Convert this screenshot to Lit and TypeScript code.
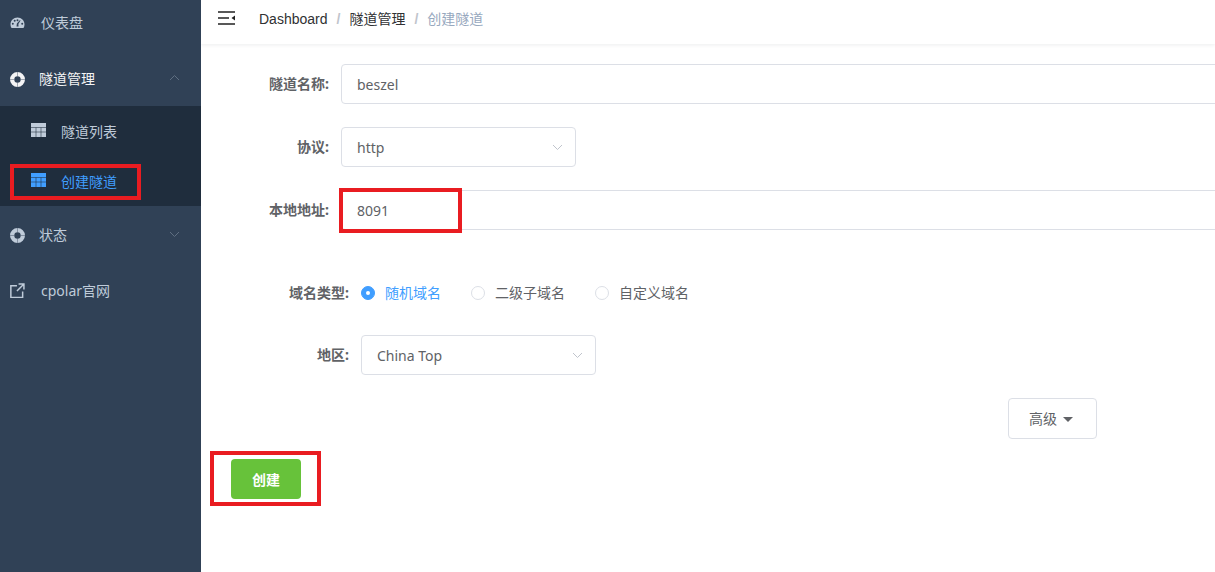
import { LitElement, css, html, svg } from 'lit'
import { customElement } from 'lit/decorators.js'

const gauge = svg`<path d="M7 1.500C3.100 1.500 0 4.600 0 8.400c0 1.300.4 2.500 1 3.600h12c.6-1.100 1-2.300 1-3.600 0-3.800-3.100-6.900-7-6.900zM2.300 8.800a1 1 0 1 1 0-2 1 1 0 0 1 0 2zm1.900-3a1 1 0 1 1 0-2 1 1 0 0 1 0 2zM7 3.200a1 1 0 1 1 0 2 1 1 0 0 1 0-2zm1 7.200H6l.4-3L9.500 4l.5.400-2.100 3.500.1 2.500zm3.700-1.600a1 1 0 1 1 0-2 1 1 0 0 1 0 2z" fill="currentColor" fill-rule="evenodd"/>`
const buoy = svg`<path d="M7.500 0a7.500 7.500 0 1 0 0 15 7.500 7.500 0 0 0 0-15zm0 4.300a3.200 3.200 0 1 1 0 6.400 3.200 3.200 0 0 1 0-6.400z" fill="currentColor" fill-rule="evenodd"/><path d="M7.500 0v4.300M7.500 10.700V15M0 7.500h4.300M10.700 7.500H15" stroke="#304156" stroke-width=".7" opacity=".6"/>`
const table = svg`<path d="M0 0h15v14H0z" fill="currentColor"/><path d="M0 4.500h15M0 9h15M5 4.500V14M10 4.500V14" stroke="#1f2d3d" stroke-width="1" fill="none" opacity=".55"/>`
const external = svg`<path d="M6.500 2.500H.8v11h11V8M8 1h5v5M13 1L6.500 7.500" fill="none" stroke="currentColor" stroke-width="1.400"/>`
const chevron = svg`<path d="M1 1l4.500 4.500L10 1" fill="none" stroke="currentColor" stroke-width="1"/>`

@customElement('app-root')
export class AppRoot extends LitElement {
  private renderSelect(value: string) {
    return html`
      <div class="select">
        <span>${value}</span>
        <svg class="arrow" width="11" height="7" viewBox="0 0 11 7">${chevron}</svg>
      </div>
    `
  }

  private renderRadio(label: string, checked = false) {
    return html`
      <div class="radio ${checked ? 'checked' : ''}">
        <i></i>
        <span>${label}</span>
      </div>
    `
  }

  public render() {
    return html`
      <aside class="sidebar">
        <div class="menu-item">
          <svg class="icon low" width="15" height="14" viewBox="0 0 14 14">${gauge}</svg>
          <span class="gap-dash">仪表盘</span>
        </div>
        <div class="menu-item open">
          <svg class="icon low" width="15" height="15" viewBox="0 0 15 15">${buoy}</svg>
          <span>隧道管理</span>
          <svg class="caret up" width="11" height="7" viewBox="0 0 11 7">${chevron}</svg>
        </div>
        <div class="submenu">
          <div class="sub-item">
            <svg width="15" height="14" viewBox="0 0 15 14">${table}</svg>
            <span>隧道列表</span>
          </div>
          <div class="sub-item active">
            <svg width="15" height="14" viewBox="0 0 15 14">${table}</svg>
            <span>创建隧道</span>
          </div>
        </div>
        <div class="menu-item">
          <svg class="icon low" width="15" height="15" viewBox="0 0 15 15">${buoy}</svg>
          <span>状态</span>
          <svg class="caret" width="11" height="7" viewBox="0 0 11 7">${chevron}</svg>
        </div>
        <div class="menu-item">
          <svg class="icon" width="15" height="15" viewBox="0 0 14 14">${external}</svg>
          <span class="gap-dash">cpolar官网</span>
        </div>
      </aside>

      <main class="main">
        <header class="navbar">
          <svg class="hamburger" width="17" height="14" viewBox="0 0 17 14">
            <path d="M0 1h17M0 7h11M0 13h17" stroke="#222" stroke-width="1.500" fill="none"/>
            <path d="M17 4.500v5L13.500 7z" fill="#222"/>
          </svg>
          <nav class="crumbs">
            <span>Dashboard</span><b>/</b><span class="cjk">隧道管理</span><b>/</b>
            <span class="cjk current">创建隧道</span>
          </nav>
        </header>

        <form class="form">
          <div class="row">
            <label>隧道名称:</label>
            <div class="input">beszel</div>
          </div>
          <div class="row">
            <label>协议:</label>
            ${this.renderSelect('http')}
          </div>
          <div class="row after-address">
            <label>本地地址:</label>
            <div class="input">8091</div>
          </div>
          <div class="row wide">
            <label>域名类型:</label>
            <div class="radios">
              ${this.renderRadio('随机域名', true)}
              ${this.renderRadio('二级子域名')}
              ${this.renderRadio('自定义域名')}
            </div>
          </div>
          <div class="row wide region">
            <label>地区:</label>
            ${this.renderSelect('China Top')}
          </div>
          <div class="advanced">
            <div class="btn-plain"><span>高级</span><i class="down"></i></div>
          </div>
          <div class="btn-create">创建</div>
        </form>
      </main>

      <div class="mark mark-menu"></div>
      <div class="mark mark-address"></div>
      <div class="mark mark-create"></div>
    `
  }

  public static styles = css`
    :host {
      display: flex;
      position: relative;
      width: 1215px;
      height: 572px;
      overflow: hidden;
      background: #fff;
      font-family: 'Noto Sans', 'Noto Sans CJK SC', sans-serif;
      font-size: 14px;
    }
    .sidebar {
      flex: 0 0 201px;
      background: #304156;
      color: #bfcbd9;
    }
    .sidebar > :first-child {
      margin-top: -6px;
    }
    .menu-item {
      display: flex;
      align-items: center;
      height: 56px;
      padding-left: 10px;
      position: relative;
    }
    .menu-item .icon {
      flex: none;
      margin-right: 14px;
    }
    .menu-item .icon.low {
      margin-top: 2px;
    }
    .menu-item .gap-dash {
      margin-left: 2px;
    }
    .menu-item.open {
      color: #f4f4f5;
    }
    .caret {
      position: absolute;
      left: 169px;
      top: 25px;
      color: #5f6f82;
    }
    .caret.up {
      transform: rotate(180deg);
      top: 24px;
    }
    .submenu {
      background: #1f2d3d;
    }
    .sub-item {
      display: flex;
      align-items: center;
      height: 50px;
      padding-left: 31px;
      gap: 15px;
    }
    .sub-item svg {
      margin-top: -3px;
    }
    .sub-item.active {
      color: #409eff;
    }
    .main {
      flex: 1;
      min-width: 0;
      overflow: hidden;
    }
    .navbar {
      display: flex;
      align-items: center;
      height: 44px;
      padding: 0 0 6px 17px;
      box-sizing: border-box;
      box-shadow: 0 1px 4px rgba(0, 21, 41, 0.08);
    }
    .hamburger {
      margin-top: -2px;
    }
    .crumbs {
      display: flex;
      align-items: center;
      margin-left: 24px;
      font: 14px 'Liberation Sans', 'Noto Sans CJK SC', sans-serif;
      color: #303133;
    }
    .crumbs b {
      font-weight: 700;
      color: #c0c4cc;
      margin: 0 9px;
    }
    .crumbs .cjk {
      font-family: 'Noto Sans CJK SC', sans-serif;
      margin-top: -2px;
    }
    .crumbs .current {
      color: #97a8be;
    }
    .form {
      padding-top: 20px;
      color: #606266;
    }
    .row {
      display: flex;
      align-items: center;
      height: 40px;
      margin-bottom: 23px;
    }
    .row label {
      flex: none;
      width: 140px;
      margin-top: -2px;
      padding-right: 12px;
      box-sizing: border-box;
      text-align: right;
      font-weight: 700;
    }
    .row.wide label {
      width: 160px;
    }
    .row.wide {
      margin-bottom: 22px;
    }
    .row.after-address {
      margin-bottom: 43px;
    }
    .row.region {
      margin-bottom: 23px;
    }
    .input {
      flex: none;
      width: 1000px;
      height: 40px;
      line-height: 40px;
      padding: 0 15px;
      box-sizing: border-box;
      border: 1px solid #dcdfe6;
      border-radius: 4px;
    }
    .select {
      flex: none;
      display: flex;
      align-items: center;
      justify-content: space-between;
      width: 235px;
      height: 40px;
      padding: 0 12px 0 15px;
      box-sizing: border-box;
      border: 1px solid #dcdfe6;
      border-radius: 4px;
    }
    .arrow {
      color: #c0c4cc;
    }
    .radios {
      display: flex;
      gap: 30px;
    }
    .radio {
      display: flex;
      align-items: center;
      gap: 10px;
    }
    .radio span {
      margin-top: -2px;
    }
    .radio i {
      width: 14px;
      height: 14px;
      border: 1px solid #dcdfe6;
      border-radius: 50%;
      box-sizing: border-box;
    }
    .radio.checked {
      color: #409eff;
    }
    .radio.checked i {
      background: #409eff;
      border-color: #409eff;
      display: grid;
      place-content: center;
    }
    .radio.checked i::after {
      content: '';
      width: 4px;
      height: 4px;
      border-radius: 50%;
      background: #fff;
    }
    .advanced {
      display: flex;
      justify-content: flex-end;
      padding-right: 118px;
      margin-bottom: 20px;
    }
    .btn-plain {
      display: flex;
      align-items: center;
      justify-content: center;
      width: 89px;
      height: 41px;
      padding-right: 3px;
      box-sizing: border-box;
      border: 1px solid #dcdfe6;
      border-radius: 4px;
    }
    .btn-plain span {
      margin-top: -2px;
    }
    .down {
      width: 0;
      height: 0;
      margin-left: 6px;
      margin-top: 2px;
      border: 5px solid transparent;
      border-top-color: #606266;
      border-bottom: 0;
    }
    .btn-create {
      display: flex;
      align-items: center;
      justify-content: center;
      width: 70px;
      height: 40px;
      margin-left: 30px;
      background: #67c23a;
      border-radius: 4px;
      color: #fff;
      font-weight: 700;
    }
    .mark {
      position: absolute;
      border: 4px solid #e91c21;
      box-sizing: border-box;
      pointer-events: none;
    }
    .mark-menu {
      left: 10px;
      top: 164px;
      width: 131px;
      height: 36px;
    }
    .mark-address {
      left: 339px;
      top: 188px;
      width: 123px;
      height: 45px;
    }
    .mark-create {
      left: 210px;
      top: 451px;
      width: 111px;
      height: 55px;
    }
  `
}
